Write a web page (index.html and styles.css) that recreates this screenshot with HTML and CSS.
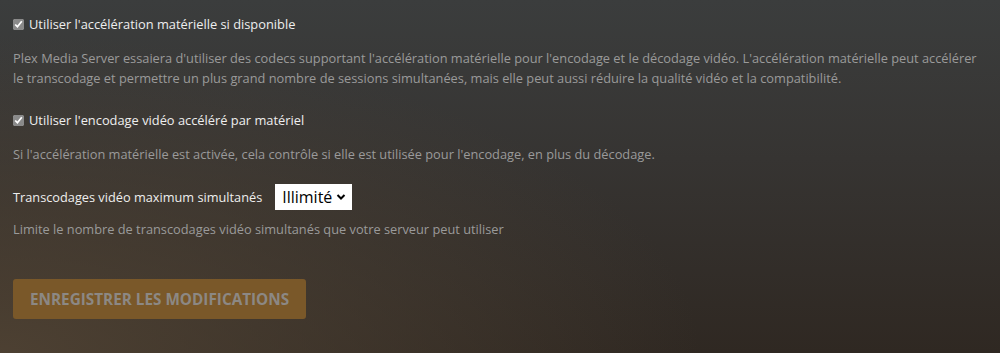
FILE: index.html
```html
<!DOCTYPE html>
<html lang="fr">
<head>
<meta charset="utf-8">
<link rel="stylesheet" href="styles.css">
</head>
<body>
<div class="page">
  <div class="setting">
    <label class="check-label"><input type="checkbox" class="cb" checked> Utiliser l'accélération matérielle si disponible</label>
    <p class="help">Plex Media Server essaiera d'utiliser des codecs supportant l'accélération matérielle pour l'encodage et le décodage vidéo. L'accélération matérielle peut accélérer le transcodage et permettre un plus grand nombre de sessions simultanées, mais elle peut aussi réduire la qualité vidéo et la compatibilité.</p>
  </div>
  <div class="setting">
    <label class="check-label"><input type="checkbox" class="cb" checked> Utiliser l'encodage vidéo accéléré par matériel</label>
    <p class="help">Si l'accélération matérielle est activée, cela contrôle si elle est utilisée pour l'encodage, en plus du décodage.</p>
  </div>
  <div class="setting setting-select">
    <div class="select-row">
      <span class="select-label">Transcodages vidéo maximum simultanés</span>
      <div class="select">
        <span class="select-value">Illimité</span>
        <svg class="chev" width="10" height="8" viewBox="0 0 10 8"><path d="M1.5 2 L5 5.5 L8.5 2" fill="none" stroke="#000" stroke-width="2"/></svg>
      </div>
    </div>
    <p class="help">Limite le nombre de transcodages vidéo simultanés que votre serveur peut utiliser</p>
  </div>
  <button class="save" disabled>ENREGISTRER LES MODIFICATIONS</button>
</div>
</body>
</html>
```

FILE: styles.css
```css
html, body {
  margin: 0;
  height: 100%;
}
body {
  font-family: "Open Sans", "Liberation Sans", sans-serif;
  background:
    radial-gradient(ellipse 70% 90% at 0% 100%, rgba(80, 67, 52, 0.9), rgba(80, 67, 52, 0) 100%),
    linear-gradient(180deg, #3b3d3d 0%, #363432 45%, #2f2822 100%);
  color: #eee;
  overflow: hidden;
}
.page {
  padding: 14px 13px;
}
.setting {
  margin-bottom: 22px;
}
.check-label {
  display: flex;
  align-items: center;
  gap: 5px;
  font-size: 12.85px;
  color: #eee;
  line-height: 20px;
}
.cb {
  margin: 0;
  width: 11px;
  height: 11px;
  accent-color: #8a8a8a;
}
.help {
  margin: 14px 0 0;
  font-size: 12.8px;
  line-height: 20px;
  color: #9a9a9a;
}
.setting-select .select-row {
  margin-top: -2px;
}
.setting-select .help {
  margin-top: 9px;
}
.select-row {
  display: flex;
  align-items: center;
  gap: 13px;
  font-size: 12.75px;
}
.select {
  display: flex;
  align-items: center;
  gap: 4px;
  background: #fff;
  color: #000;
  height: 26px;
  padding: 0 6px 0 7px;
  font-size: 16px;
  box-sizing: border-box;
}
.save {
  margin-top: 18px;
  height: 40px;
  padding: 0 17px;
  border: 0;
  border-radius: 3px;
  background: #7a5829;
  color: #8c8884;
  font-family: "Open Sans", "Liberation Sans", sans-serif;
  font-weight: 700;
  font-size: 15.3px;
}
```
